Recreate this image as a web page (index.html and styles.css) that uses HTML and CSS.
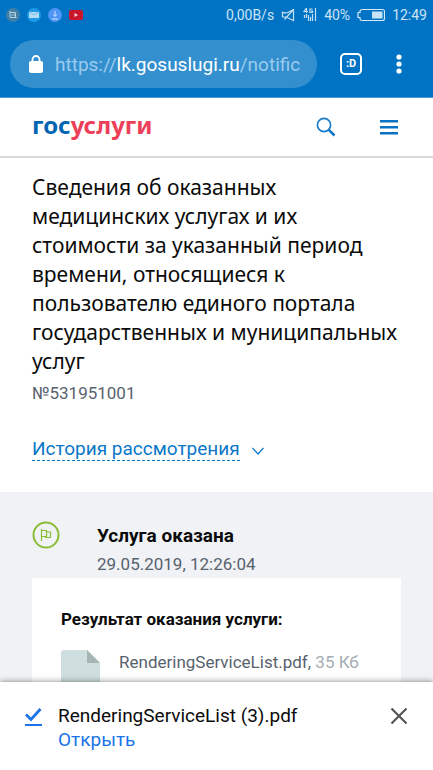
FILE: index.html
```html
<!DOCTYPE html>
<html lang="ru">
<head>
<meta charset="utf-8">
<meta name="viewport" content="width=device-width, initial-scale=1">
<title>Госуслуги</title>
<link rel="stylesheet" href="styles.css">
</head>
<body>
<div class="screen">
  <header class="browser">
    <div class="status">
      <div class="status-apps">
        <svg width="14" height="14" viewBox="0 0 14 14" aria-hidden="true"><circle cx="7" cy="7" r="7" fill="#3f7fa6"/><path d="M4 3v6.500h6M4 4.500h5.500V8M5.500 8l2-2 3 4" fill="none" stroke="#b9d3e2"/></svg>
        <svg width="14" height="14" viewBox="0 0 14 14" aria-hidden="true"><circle cx="7" cy="7" r="7" fill="#1d9be8"/><path d="M2 4h10v6H2z" fill="#b5dcf4"/><path d="M2 4l5 3 5-3" fill="none" stroke="#7dbfe8"/></svg>
        <svg width="14" height="14" viewBox="0 0 14 14" aria-hidden="true"><circle cx="7" cy="7" r="7" fill="#4c94f5"/><path d="M7 3v5M5 6.500l2 2 2-2M4 11h6" fill="none" stroke="#d5e6ff"/></svg>
        <svg width="14" height="14" viewBox="0 0 14 14" aria-hidden="true"><rect y="2" width="14" height="10" rx="2" fill="#c9162b"/><path d="M5.500 5v4L9 7z" fill="#f3d6dc"/></svg>
      </div>
      <div class="status-info">
        <span>0,00B/s</span>
        <svg width="15" height="16" viewBox="0 0 15 16" fill="none" stroke="#c3dff3" stroke-width="1.200" aria-hidden="true"><path d="M1.500 5.500v4.500h3.500l7.500 3.500V2.500L6 6zM1 5l2 1h3M3.500 12.500L12.500 2.500"/></svg>
        <svg width="14" height="16" viewBox="0 0 14 16" fill="none" stroke="#c3dff3" aria-hidden="true"><path d="M3.500 1L1 4.500h4M3.500 1v5M9.500 2H7v3.500h2.500V4H8M1.500 8v3M3.500 7v4M5.500 8v6M7.500 10v4M9.500 7v7M12.500 1v13" stroke-width="1.200"/></svg>
        <span>40%</span>
        <svg width="28" height="14" viewBox="0 0 28 14" aria-hidden="true"><path d="M5 1.500h20.500a2 2 0 0 1 2 2v7a2 2 0 0 1-2 2H5a2 2 0 0 1-2-2V9.500H1v-5h2v-1a2 2 0 0 1 2-2z" fill="none" stroke="#d5eaf8" stroke-width="1.200"/><path d="M15 3.500h10.500v7H15z" fill="#c7e3f7"/></svg>
        <span>12:49</span>
      </div>
    </div>
    <div class="toolbar">
      <div class="address">
        <svg width="14" height="18" viewBox="0 0 14 18" aria-hidden="true"><rect y="6" width="14" height="12" rx="2" fill="#fff"/><path d="M3.500 7V4.500a3.500 3.500 0 0 1 7 0V7" fill="none" stroke="#fff" stroke-width="1.800"/></svg>
        <span class="url">https://<b>lk.gosuslugi.ru</b>/notific</span>
      </div>
      <button class="tabs" aria-label="Вкладки">:D</button>
      <button class="icon-button menu-dots" aria-label="Меню браузера"><svg width="6" height="20" viewBox="0 0 6 20" fill="#fff"><circle cx="3" cy="3" r="2.600"/><circle cx="3" cy="10" r="2.600"/><circle cx="3" cy="17" r="2.600"/></svg></button>
    </div>
  </header>

  <nav class="site-bar">
    <a class="logo" href="#">гос<span>услуги</span></a>
    <button class="icon-button" aria-label="Поиск"><svg width="20" height="20" viewBox="0 0 20 20" fill="none" stroke="#1478c8"><circle cx="8" cy="8" r="6.600" stroke-width="1.600"/><path d="M12.800 12.800l5.700 5.700" stroke-width="2.600"/></svg></button>
    <button class="icon-button" aria-label="Меню"><svg width="20" height="20" viewBox="0 0 20 20" fill="#0c72c4"><path d="M1 3h18v2.400H1zM1 9h18v2.400H1zM1 15h18v2.400H1z"/></svg></button>
  </nav>

  <main class="page">
    <section class="summary">
      <h1>Сведения об оказанных медицинских услугах и их стоимости за указанный период времени, относящиеся к пользователю единого портала государственных и муниципальных услуг</h1>
      <p class="number">№531951001</p>
      <button class="history"><span>История рассмотрения</span><svg width="14" height="10" viewBox="0 0 14 10" fill="none" stroke="#0b77c8" stroke-width="1.200" aria-hidden="true"><path d="M1.500 2L7 8l5.500-6"/></svg></button>
    </section>
    <section class="result">
      <div class="event">
        <svg width="28" height="28" viewBox="0 0 28 28" fill="none" stroke="#89bd35" aria-hidden="true"><circle cx="14" cy="14" r="12.500" stroke-width="2"/><path d="M9.500 8v12M9.500 9.500h5v6h-5M14.500 11h4v5.500h-5v-1.500" stroke-width="1.200"/></svg>
        <div>
          <h2>Услуга оказана</h2>
          <p class="date">29.05.2019, 12:26:04</p>
        </div>
      </div>
      <div class="card">
        <h3>Результат оказания услуги:</h3>
        <div class="file">
          <svg width="39" height="50" viewBox="0 0 39 50" aria-hidden="true"><path d="M3 0h23l13 13v37H0V3a3 3 0 0 1 3-3z" fill="#cfdfdf"/><path d="M26 0l13 13H26z" fill="#a5b6b5"/></svg>
          <a href="#">RenderingServiceList.pdf, <span>35 Кб</span></a>
        </div>
      </div>
    </section>
  </main>

  <aside class="download">
    <svg class="done" width="17" height="20" viewBox="0 0 17 20" fill="none" stroke="#1a73e8" aria-hidden="true"><path d="M1 7.500l5 5L15.500 2" stroke-width="2.800"/><path d="M0 18h17" stroke-width="2"/></svg>
    <div class="download-text">
      <p>RenderingServiceList (3).pdf</p>
      <a href="#">Открыть</a>
    </div>
    <button class="icon-button close" aria-label="Закрыть"><svg width="18" height="18" viewBox="0 0 18 18" fill="none" stroke="#555" stroke-width="2.200"><path d="M1.500 1.500l15 15M16.500 1.500l-15 15"/></svg></button>
  </aside>
</div>
</body>
</html>
```
FILE: styles.css
```css
* { box-sizing: border-box; }

body {
  margin: 0;
  font-family: Roboto, "Liberation Sans", sans-serif;
  color: #0b0b0b;
  background: #fff;
}

h1, h2, h3, p { margin: 0; }

svg { display: block; flex: none; }

a { text-decoration: none; }

button {
  border: 0;
  padding: 0;
  background: none;
  font: inherit;
}

.screen {
  display: flex;
  flex-direction: column;
  height: 100vh;
  overflow: hidden;
}

.browser {
  flex: none;
  background: #0173c4;
  border-bottom: 1px solid #4a9bd6;
}

.status {
  display: flex;
  justify-content: space-between;
  align-items: center;
  height: 30px;
  padding: 0 6px;
}

.status-apps, .status-info { display: flex; align-items: center; }

.status-apps { gap: 7px; }

.status-info {
  gap: 7px;
  font-size: 14px;
  color: #cde4f5;
}

.toolbar {
  display: flex;
  align-items: center;
  padding: 10px 31px 9px 10px;
}

.address {
  flex: 1;
  display: flex;
  align-items: center;
  gap: 12px;
  height: 48px;
  padding: 0 10px 0 19px;
  border-radius: 24px;
  background: #348fcf;
}

.url {
  font-size: 19px;
  color: #9acbed;
  white-space: nowrap;
}

.url b { font-weight: 400; color: #fff; }

.tabs {
  width: 22px;
  height: 22px;
  margin-left: 23px;
  border: 2px solid #fff;
  border-radius: 5px;
  color: #fff;
  font-size: 11px;
  font-weight: 700;
  line-height: 16px;
}

.menu-dots { margin-left: 34px; }

.site-bar {
  flex: none;
  display: flex;
  align-items: center;
  gap: 43px;
  height: 60px;
  padding: 0 34px 0 32px;
  border-bottom: 2px solid #d9d9d9;
}

.logo {
  flex: 1;
  padding-bottom: 4px;
  font-family: "Noto Sans", sans-serif;
  font-size: 24px;
  font-weight: 700;
  line-height: 30px;
  color: #0065b1;
}

.logo span { color: #ee3f58; }

.page {
  flex: 1;
  min-height: 0;
  overflow: hidden;
}

.summary { padding: 15px 32px 31px; }

h1 {
  font-family: "Noto Sans", sans-serif;
  font-size: 21px;
  font-weight: 400;
  line-height: 29px;
}

.number {
  margin-top: 5px;
  font-size: 17px;
  line-height: 24px;
  color: #58626d;
}

.history {
  display: flex;
  align-items: center;
  gap: 11px;
  margin-top: 32px;
  font-size: 19px;
  line-height: 23px;
  color: #0b77c8;
}

.history span { border-bottom: 1px dashed #0b77c8; }

.history svg { margin-top: 4px; }

.result {
  padding: 29px 32px;
  background: #f0f2f6;
}

.event { display: flex; gap: 37px; }

h2 {
  font-size: 19px;
  font-weight: 700;
  line-height: 30px;
}

.date {
  font-size: 17px;
  line-height: 27px;
  color: #58626d;
}

.card {
  padding: 29px;
  background: #fff;
}

h3 {
  font-size: 17px;
  font-weight: 700;
  line-height: 24px;
}

.file {
  display: flex;
  gap: 19px;
  margin-top: 19px;
  font-size: 17px;
  line-height: 24px;
}

.file a { color: #58626d; }

.file span { color: #a3abb3; }

.download {
  position: relative;
  flex: none;
  display: flex;
  align-items: flex-start;
  padding: 22px 25px 18px;
  background: #fff;
  box-shadow: 0 0 6px rgba(0, 0, 0, 0.5);
}

.done { margin-top: 3px; }

.download-text {
  flex: 1;
  margin-left: 16px;
  font-size: 19px;
  line-height: 24px;
}

.download-text a { display: block; color: #1a73e8; }

.close { margin-top: 3px; }
```
